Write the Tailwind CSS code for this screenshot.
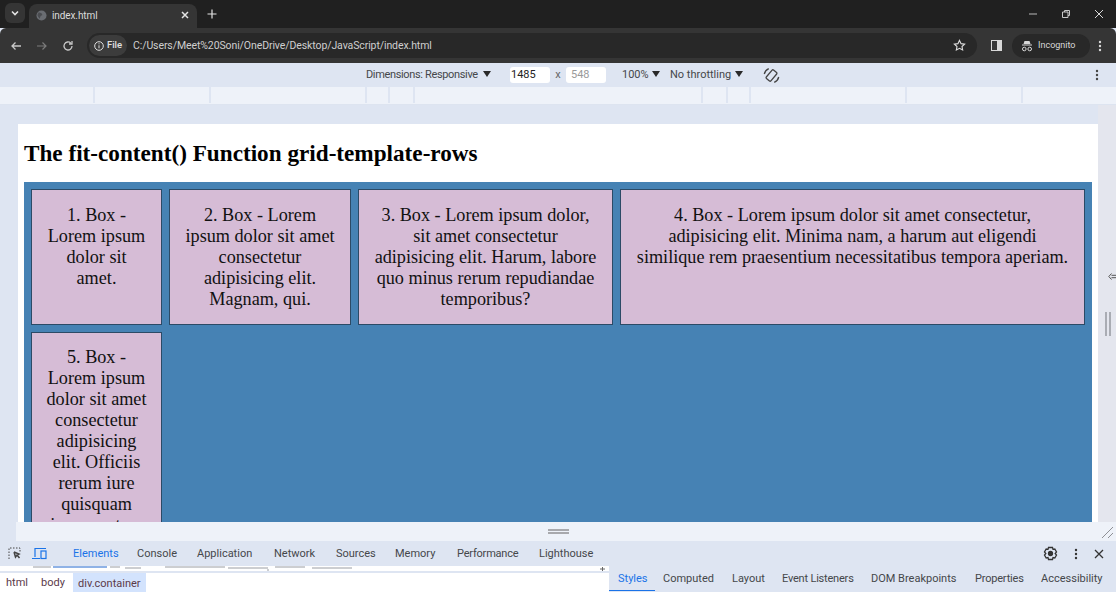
<!DOCTYPE html>
<html lang="en">
<head>
<meta charset="UTF-8">
<title>index.html</title>
<script src="https://cdn.jsdelivr.net/npm/@tailwindcss/browser@4"></script>
</head>
<body class="w-[1116px] h-[592px] overflow-hidden bg-[#dee5f2] font-['Roboto',sans-serif]">
<div class="flex flex-col h-[592px]">

  <!-- tab strip -->
  <div class="h-[28px] bg-[#202020] flex items-center text-[#e3e3e3] shrink-0">
    <div class="ml-[5px] w-[20px] h-[20px] mt-[-2px] rounded-[6px] bg-[#353535] flex items-center justify-center">
      <svg width="10" height="10" viewBox="0 0 10 10" fill="none" stroke="#e3e3e3" stroke-width="1.600"><path d="M2 3.500l3 3 3-3"/></svg>
    </div>
    <div class="ml-[4px] w-[168px] h-[24px] mt-[4px] pb-[2px] bg-[#353535] rounded-t-[8px] flex items-center pl-[7px] pr-[7px]">
      <svg width="11" height="11" viewBox="0 0 12 12"><circle cx="6" cy="6" r="5.500" fill="#6a6d72"/><path d="M3 2.500l3 1 1 2-2 1-1 3-1.500-2-1-2z" fill="#4a4c50"/></svg>
      <span class="ml-[5px] text-[10px] tracking-[-0.1px] text-[#dcdcdc]">index.html</span>
      <svg class="ml-auto" width="10" height="10" viewBox="0 0 10 10" stroke="#e3e3e3" stroke-width="1.500"><path d="M2 2l6 6M8 2l-6 6"/></svg>
    </div>
    <svg class="ml-[10px]" width="10" height="10" viewBox="0 0 10 10" stroke="#e3e3e3" stroke-width="1.200"><path d="M5 0.500v9M0.500 5h9"/></svg>
    <div class="ml-auto flex items-center mr-[12px] gap-[23px]">
      <svg width="10" height="10" viewBox="0 0 10 10" stroke="#b8b8b8"><path d="M1 5h8"/></svg>
      <svg width="10" height="10" viewBox="0 0 10 10" fill="none" stroke="#c8c8c8"><path d="M1.500 3h5.500v5.500H1.500zM3.500 3V1.500h5v5H7"/></svg>
      <svg width="10" height="10" viewBox="0 0 10 10" stroke="#d8d8d8"><path d="M1 1l8 8M9 1l-8 8"/></svg>
    </div>
  </div>

  <!-- address bar -->
  <div class="h-[35px] bg-[#353535] rounded-t-[6px] flex items-center shrink-0 text-[#d8d8d8]">
    <svg class="ml-[10px]" width="12" height="12" viewBox="0 0 12 12" fill="none" stroke="#c8c8c8" stroke-width="1.300"><path d="M11 6H2M5.500 2.500L2 6l3.500 3.500"/></svg>
    <svg class="ml-[14px]" width="12" height="12" viewBox="0 0 12 12" fill="none" stroke="#7c7c7c" stroke-width="1.200"><path d="M1 6h9M6.500 2.500L10 6l-3.500 3.500"/></svg>
    <svg class="ml-[14px]" width="12" height="12" viewBox="0 0 12 12" fill="none" stroke="#c8c8c8" stroke-width="1.300"><path d="M10 6a4 4 0 1 1-1.200-2.900M10 1v3H7"/></svg>
    <div class="ml-[13px] w-[890px] h-[25px] rounded-full bg-[#282828] flex items-center pl-[2px] pr-[11px]">
      <div class="h-[21px] w-[38px] rounded-full bg-[#3c3c3c] flex items-center justify-center gap-[3px]">
        <svg width="10" height="10" viewBox="0 0 10 10" fill="none" stroke="#e0e0e0"><circle cx="5" cy="5" r="4.300"/><path d="M5 4.300v3M5 2.300v1"/></svg>
        <span class="text-[9.500px] font-medium text-[#e0e0e0]">File</span>
      </div>
      <span class="ml-[6px] text-[10.500px] tracking-[-0.1px] text-[#cfcfcf] whitespace-nowrap">C:/Users/Meet%20Soni/OneDrive/Desktop/JavaScript/index.html</span>
      <svg class="ml-auto" width="13" height="13" viewBox="0 0 14 14" fill="none" stroke="#dcdcdc" stroke-width="1.200"><path d="M7 1.500l1.700 3.500 3.800.5-2.800 2.600.7 3.800L7 10.100l-3.400 1.800.7-3.800L1.500 5.500l3.800-.5z"/></svg>
    </div>
    <svg class="ml-[14px]" width="11" height="11" viewBox="0 0 11 11"><rect x="0.500" y="0.500" width="10" height="10" fill="none" stroke="#d8d8d8"/><rect x="6" y="0.500" width="4.500" height="10" fill="#d8d8d8"/></svg>
    <div class="ml-[10px] w-[78px] h-[24px] rounded-full bg-[#282828] flex items-center pl-[9px] gap-[5px]">
      <svg width="12" height="12" viewBox="0 0 12 12" fill="#d8d8d8"><path d="M3.500 1h5l1 3h-7zM1 4.600h10v1H1z"/><circle cx="3.300" cy="9" r="1.800" fill="none" stroke="#d8d8d8"/><circle cx="8.700" cy="9" r="1.800" fill="none" stroke="#d8d8d8"/></svg>
      <span class="text-[9px] text-[#d8d8d8]">Incognito</span>
    </div>
    <svg class="ml-[8px]" width="4" height="12" viewBox="0 0 4 12" fill="#d8d8d8"><circle cx="2" cy="2" r="1.200"/><circle cx="2" cy="6" r="1.200"/><circle cx="2" cy="10" r="1.200"/></svg>
  </div>

  <!-- device toolbar -->
  <div class="h-[24px] bg-[#dee5f2] flex items-center shrink-0 text-[11px] text-[#45474a] relative">
    <span class="ml-[366px] mt-[1px] w-[115px] whitespace-nowrap tracking-[-0.35px]">Dimensions: Responsive</span>
    <svg class="ml-[2px] mb-[3px]" width="8" height="6" viewBox="0 0 8 6" fill="#2a2a2a"><path d="M0 0h8L4 6z"/></svg>
    <div class="ml-[19px] w-[40px] h-[16px] bg-white rounded-[3px] pl-[1px] text-[#222] leading-[16px]">1485</div>
    <span class="w-[16px] text-center text-[#666]">x</span>
    <div class="w-[40px] h-[16px] bg-white rounded-[3px] pl-[5px] text-[#9a9a9a] leading-[16px]">548</div>
    <span class="ml-[16px] mt-[1px] w-[27px]">100%</span>
    <svg class="ml-[3px] mb-[3px]" width="8" height="6" viewBox="0 0 8 6" fill="#2a2a2a"><path d="M0 0h8L4 6z"/></svg>
    <span class="ml-[10px] mt-[1px] w-[63px] whitespace-nowrap">No throttling</span>
    <svg class="ml-[2px] mb-[3px]" width="8" height="6" viewBox="0 0 8 6" fill="#2a2a2a"><path d="M0 0h8L4 6z"/></svg>
    <svg class="ml-[20px]" width="17" height="17" viewBox="0 0 17 17" fill="none" stroke="#444" stroke-width="1.300"><g transform="rotate(40 8.500 8.500)"><rect x="5.500" y="3" width="6" height="11" rx="1"/><path d="M2 5a7.500 7.500 0 0 0 0 7M15 5a7.500 7.500 0 0 1 0 7"/></g></svg>
    <svg class="ml-auto mr-[17px]" width="4" height="12" viewBox="0 0 4 12" fill="#444"><circle cx="2" cy="2" r="1.200"/><circle cx="2" cy="6" r="1.200"/><circle cx="2" cy="10" r="1.200"/></svg>
  </div>

  <!-- media query ruler -->
  <div class="h-[18px] bg-[#eef2f9] border-b border-[#dde4f0] shrink-0 flex items-stretch pb-[1px]">
    <div class="w-[95px] border-r-2 border-[#dee5f2]"></div>
    <div class="w-[116px] border-r-2 border-[#dee5f2]"></div>
    <div class="w-[156px] border-r-2 border-[#dee5f2]"></div>
    <div class="w-[23px] border-r-2 border-[#dee5f2]"></div>
    <div class="w-[25px] border-r-2 border-[#dee5f2]"></div>
    <div class="w-[288px] border-r-2 border-[#dee5f2]"></div>
    <div class="w-[25px] border-r-2 border-[#dee5f2]"></div>
    <div class="w-[23px] border-r-2 border-[#dee5f2]"></div>
    <div class="w-[156px] border-r-2 border-[#dee5f2]"></div>
    <div class="w-[116px] border-r-2 border-[#dee5f2]"></div>
  </div>

  <!-- emulated page -->
  <div class="h-[417px] shrink-0 flex bg-[#dee5f2] pt-[19px] overflow-hidden">
    <div class="ml-[18px] w-[1080px] bg-white px-[6px] overflow-hidden font-['Liberation_Serif',serif]">
      <h1 class="mt-[17px] h-[24px] text-[23.200px] leading-[24px] font-bold text-black">The fit-content() Function grid-template-rows</h1>
      <div class="mt-[17px] bg-[#4682b4] p-[7px] grid grid-cols-[131px_182px_255px_465px] gap-[7px] h-[400px] content-start text-[18.200px] leading-[21px] text-center text-[#111]">
        <div class="h-[136px] bg-[#d6bcd6] border border-[#2c4a66] px-[14px] pt-[15px]">1. Box - Lorem ipsum dolor sit amet.</div>
        <div class="h-[136px] bg-[#d6bcd6] border border-[#2c4a66] px-[14px] pt-[15px]">2. Box - Lorem ipsum dolor sit amet consectetur adipisicing elit. Magnam, qui.</div>
        <div class="h-[136px] bg-[#d6bcd6] border border-[#2c4a66] px-[14px] pt-[15px]">3. Box - Lorem ipsum dolor, sit amet consectetur adipisicing elit. Harum, labore quo minus rerum repudiandae temporibus?</div>
        <div class="h-[136px] bg-[#d6bcd6] border border-[#2c4a66] px-[14px] pt-[15px]">4. Box - Lorem ipsum dolor sit amet consectetur, adipisicing elit. Minima nam, a harum aut eligendi similique rem praesentium necessitatibus tempora aperiam.</div>
        <div class="h-[220px] bg-[#d6bcd6] border border-[#2c4a66] px-[14px] pt-[14px]">5. Box - Lorem ipsum dolor sit amet consectetur adipisicing elit. Officiis rerum iure quisquam ipsam autem</div>
      </div>
    </div>
    <div class="relative w-[18px] bg-[#e4e6ee] mt-[-19px]">
      <svg class="absolute left-[10px] top-[168px]" width="8" height="7" viewBox="0 0 8 7" fill="none" stroke="#555"><path d="M3.500 0.500L0.800 3.500l2.700 3M3.500 2.300H8M3.500 4.700H8"/></svg>
      <div class="absolute left-[7px] top-[207px] w-[6px] h-[24px] border-x-2 border-[#a9acb3]"></div>
    </div>
  </div>

  <!-- resize strip -->
  <div class="relative h-[19px] bg-[#eef2f9] shrink-0 ml-[16px] flex items-center justify-center">
    <div class="ml-[-16px] w-[21px] h-[5px] border-y-2 border-[#a8a9ad]"></div>
    <svg class="absolute right-[3px] top-[4px]" width="12" height="12" viewBox="0 0 12 12" stroke="#8e9095"><path d="M1 12L12 1M7 12l5-5"/></svg>
  </div>

  <!-- devtools tabs -->
  <div class="h-[25px] bg-[#dee5f2] shrink-0 flex items-center text-[11px] text-[#45474a] whitespace-nowrap">
    <svg class="ml-[8px]" width="13" height="13" viewBox="0 0 13 13" fill="none" stroke="#444"><path stroke-dasharray="1.500 1.500" d="M1 12V1h11v4"/><path stroke-width="1.500" d="M6 5l5 2-2 1 2.500 3M6 5l1.500 5 1.500-2"/></svg>
    <svg class="ml-[11px]" width="15" height="13" viewBox="0 0 15 13" fill="none" stroke="#1a73e8" stroke-width="1.200"><path d="M3 10V1.500h11M0 11.500h8"/><rect x="9" y="4" width="5" height="7.500"/></svg>
    <span class="ml-[26px] mt-[2px] w-[44px] text-[#1a73e8]">Elements</span>
    <span class="ml-[20px] mt-[2px] w-[39px]">Console</span>
    <span class="ml-[21px] mt-[2px] w-[55px]">Application</span>
    <span class="ml-[22px] mt-[2px] w-[41px]">Network</span>
    <span class="ml-[21px] mt-[2px] w-[38px]">Sources</span>
    <span class="ml-[21px] mt-[2px] w-[41px]">Memory</span>
    <span class="ml-[21px] mt-[2px] w-[61px] tracking-[-0.2px]">Performance</span>
    <span class="ml-[21px] mt-[2px] w-[53px]">Lighthouse</span>
    <svg class="ml-auto" width="15" height="15" viewBox="0 0 15 15" fill="none" stroke="#333" stroke-width="1.300"><path d="M5.500 1.500h4l.5 1.800 1.800-.3 1.700 3-1.300 1.500 1.300 1.500-1.700 3-1.800-.4-.5 1.900h-4l-.5-1.900-1.800.4-1.700-3L2.800 7.500 1.500 6l1.700-3 1.800.3z"/><circle cx="7.500" cy="7.500" r="2" fill="#333"/></svg>
    <svg class="ml-[16px]" width="4" height="12" viewBox="0 0 4 12" fill="#333"><circle cx="2" cy="2" r="1.200"/><circle cx="2" cy="6" r="1.200"/><circle cx="2" cy="10" r="1.200"/></svg>
    <svg class="ml-[16px] mr-[12px]" width="10" height="10" viewBox="0 0 10 10" stroke="#333" stroke-width="1.300"><path d="M1 1l8 8M9 1l-8 8"/></svg>
  </div>

  <!-- breadcrumbs + sidebar tabs -->
  <div class="h-[26px] shrink-0 flex text-[11px] whitespace-nowrap">
    <div class="w-[609px] bg-white">
      <svg class="block" width="609" height="5" viewBox="0 0 609 5"><rect width="609" height="5" fill="#fff"/><rect x="53" width="54" height="2" fill="#8fb2e6"/><path d="M33 1h18M110 1h10M125 2h16M165 1h60M228 2h40M268 3v2M275 1h30M312 2h40" stroke="#9a9da3" fill="none"/><path d="M600 3h5M602.500 1v4" stroke="#666"/></svg>
      <div class="h-[2px] bg-[#dee5f2]"></div>
      <div class="flex items-center h-[19px] text-[#5b3a4a]">
        <span class="ml-[6px] mt-[2px] w-[22px]">html</span>
        <span class="ml-[13px] mt-[2px] w-[24px]">body</span>
        <span class="ml-[8px] h-[19px] w-[73px] pl-[5px] bg-[#d3e3fd] leading-[21px]">div.container</span>
      </div>
    </div>
    <div class="flex-1 bg-[#dee5f2] flex items-start text-[#45474a] h-[25px] leading-[25px]">
      <span class="pl-[9px] w-[46px] text-[#1a73e8] border-b border-[#1a73e8] h-[25px]">Styles</span>
      <span class="ml-[8px] w-[51px]">Computed</span>
      <span class="ml-[18px] w-[33px]">Layout</span>
      <span class="ml-[17px] w-[72px] tracking-[-0.2px]">Event Listeners</span>
      <span class="ml-[17px] w-[86px]">DOM Breakpoints</span>
      <span class="ml-[18px] w-[49px] tracking-[-0.2px]">Properties</span>
      <span class="ml-[17px] w-[58px]">Accessibility</span>
    </div>
  </div>
</div>
</body>
</html>
